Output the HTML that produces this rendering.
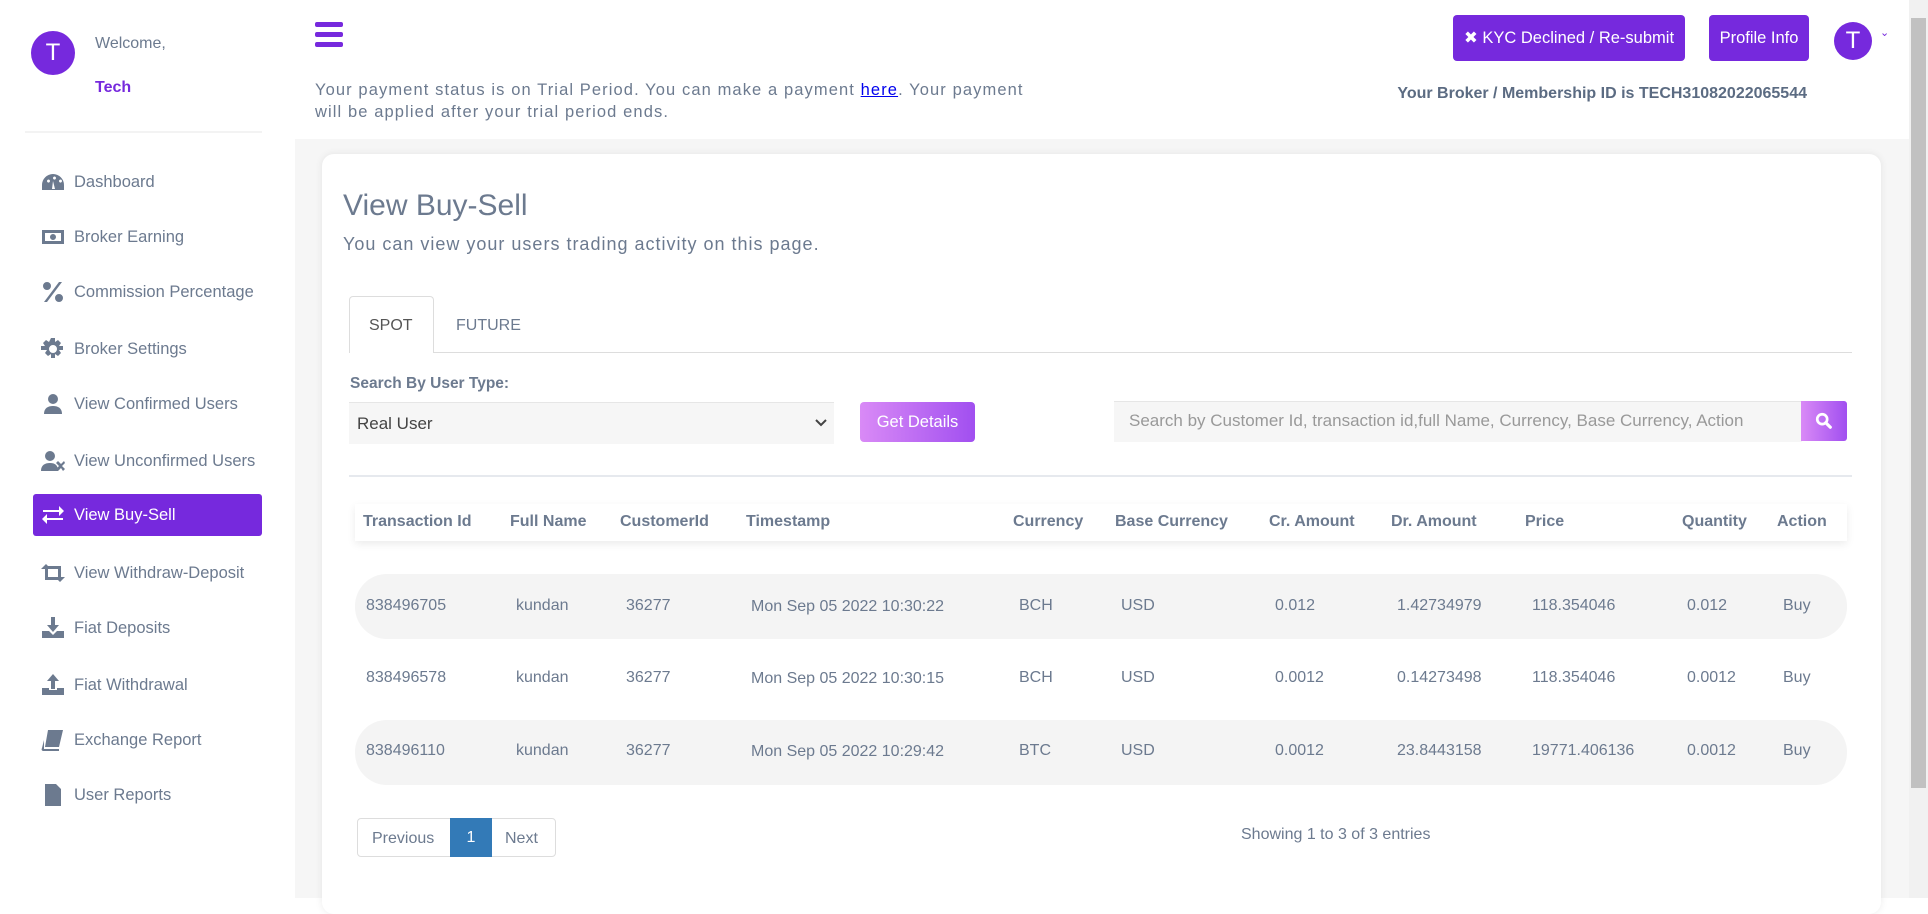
<!DOCTYPE html>
<html><head><meta charset="utf-8"><style>
*{box-sizing:border-box;margin:0;padding:0}
body{width:1928px;height:898px;overflow:hidden;font-family:"Liberation Sans",sans-serif;background:#fff;position:relative;color:#6c7a8f}
.abs{position:absolute}
.side{left:0;top:0;width:295px;height:898px;background:#fff}
.main{left:295px;top:139px;width:1614px;height:759px;background:#f6f6f6}
.av{border-radius:50%;background:#7629dd;color:#fff;display:flex;align-items:center;justify-content:center}
.mi{position:absolute;left:41px;font-size:16.5px;color:#6c7a8f;display:flex;align-items:center;height:40px}
.mi svg{width:24px;height:22px;margin-right:9px;fill:#6c7a8f}
.mi.act{left:33px;width:229px;height:42px;background:#7629dd;color:#fff;border-radius:3px;padding-left:8px}
.mi.act svg{fill:#fff}
.btn{background:#7629dd;color:#fff;border-radius:4px;font-size:16.5px;display:flex;align-items:center;justify-content:center}
.card{left:322px;top:154px;width:1559px;height:760px;background:#fff;border-radius:12px;box-shadow:0 0 8px rgba(0,0,0,.08)}
.th{position:absolute;top:513px;font-size:16px;font-weight:bold;color:#6c7a8f}
.td{position:absolute;font-size:16px;color:#6c7a8f}
.row{position:absolute;left:355px;width:1492px;height:65px;background:#f4f4f4;border-radius:32px}
</style></head><body>
<div class="abs side"></div>
<div class="abs main"></div>
<div class="abs av" style="left:31px;top:31px;width:44px;height:44px;font-size:24px">T</div>
<div class="abs" style="left:95px;top:35px;font-size:16px">Welcome,</div>
<div class="abs" style="left:95px;top:79px;font-size:16px;font-weight:bold;color:#7629dd">Tech</div>
<div class="abs" style="left:25px;top:131px;width:237px;height:2px;background:#f3f3f3"></div>

<div class="mi" style="top:162px"><svg viewBox="0 0 24 22"><path d="M12 3A11 11 0 0 0 1 14v5h22v-5A11 11 0 0 0 12 3zm0 4a1.5 1.5 0 1 1 0 .1zM6 10a1.5 1.5 0 1 1 0 .1zm12 0a1.5 1.5 0 1 1 0 .1zM11 18l1-8 2 8z"/></svg>Dashboard</div>
<div class="mi" style="top:217px"><svg viewBox="0 0 24 22"><path d="M1 4h22v14H1zm3 3v8h16V7zm8 1a3 3 0 1 1 0 6 3 3 0 0 1 0-6z"/></svg>Broker Earning</div>
<div class="mi" style="top:272px"><svg viewBox="0 0 24 22"><path d="M6 1a4 4 0 1 1 0 8 4 4 0 0 1 0-8zm12 12a4 4 0 1 1 0 8 4 4 0 0 1 0-8zM18 1h3L6 21H3z"/></svg>Commission Percentage</div>
<div class="mi" style="top:329px"><svg viewBox="0 0 24 22"><path d="M10 0h4v4l3-2 3 3-2 3h4v4h-4l2 3-3 3-3-2v4h-4v-4l-3 2-3-3 2-3H0V8h4L2 5l3-3 3 2zM12 7a4 4 0 1 0 0 8 4 4 0 0 0 0-8z"/></svg>Broker Settings</div>
<div class="mi" style="top:384px"><svg viewBox="0 0 24 22"><circle cx="12" cy="6" r="5"/><path d="M3 21c0-6 4-8 9-8s9 2 9 8z"/></svg>View Confirmed Users</div>
<div class="mi" style="top:441px"><svg viewBox="0 0 24 22"><circle cx="9" cy="6" r="5"/><path d="M0 21c0-6 4-8 9-8s8 2 8 8zM15 13l2-2 3 3 3-3 1 2-3 3 3 3-2 2-2-3-3 3-2-2 3-3z"/></svg>View Unconfirmed Users</div>
<div class="mi act" style="top:494px"><svg viewBox="0 0 24 22"><path d="M2 6h16V2l5 5-5 5V8H2zM22 14H6v-4l-5 5 5 5v-4h16z"/></svg>View Buy-Sell</div>
<div class="mi" style="top:553px"><svg viewBox="0 0 24 22"><path d="M5 2l5 5H7v8h9l3 3H4V7H0zM19 20l-5-5h3V7H8L5 4h15v11h4z"/></svg>View Withdraw-Deposit</div>
<div class="mi" style="top:608px"><svg viewBox="0 0 24 22"><path d="M10 0h4v8h4l-6 7-6-7h4zM1 14h7l4 4 4-4h7v7H1z"/></svg>Fiat Deposits</div>
<div class="mi" style="top:665px"><svg viewBox="0 0 24 22"><path d="M12 0l6 7h-4v8h-4V7H6zM1 14h7v2h8v-2h7v7H1z"/></svg>Fiat Withdrawal</div>
<div class="mi" style="top:720px"><svg viewBox="0 0 24 22"><path d="M7 1h15l-4 17H4zM3 20h15v2H3c-2 0-3-1-2-3l2-8z"/></svg>Exchange Report</div>
<div class="mi" style="top:775px"><svg viewBox="0 0 24 22"><path d="M4 0h11l5 5v17H4zM7 10h10v2H7zm0 4h10v2H7zm0 4h10v2H7z"/></svg>User Reports</div>

<div class="abs" style="left:315px;top:22px;width:28px;height:5px;background:#7629dd;border-radius:2px"></div>
<div class="abs" style="left:315px;top:32px;width:28px;height:5px;background:#7629dd;border-radius:2px"></div>
<div class="abs" style="left:315px;top:42px;width:28px;height:5px;background:#7629dd;border-radius:2px"></div>
<div class="abs" style="left:315px;top:79px;width:760px;font-size:16.5px;line-height:22px;letter-spacing:1.1px;color:#6c7a8f">Your payment status is on Trial Period. You can make a payment <span style="color:#0000ee;text-decoration:underline">here</span>. Your payment<br>will be applied after your trial period ends.</div>

<div class="abs btn" style="left:1453px;top:15px;width:232px;height:46px">✖ KYC Declined / Re-submit</div>
<div class="abs btn" style="left:1709px;top:15px;width:100px;height:46px">Profile Info</div>
<div class="abs av" style="left:1834px;top:22px;width:38px;height:38px;font-size:24px">T</div>
<div class="abs" style="left:1880px;top:26px;font-size:11px;color:#7629dd">&#8964;</div>
<div class="abs" style="right:121px;top:85px;font-size:16px;font-weight:bold;color:#5b6b82">Your Broker / Membership ID is TECH31082022065544</div>

<div class="abs" style="left:1909px;top:0;width:19px;height:898px;background:#f1f1f1"></div>
<div class="abs" style="left:1911px;top:18px;width:15px;height:770px;background:#c1c1c1"></div>

<div class="abs card"></div>
<div class="abs" style="left:343px;top:189px;font-size:30px;color:#6c7a8f">View Buy-Sell</div>
<div class="abs" style="left:343px;top:234px;font-size:18px;letter-spacing:1px">You can view your users trading activity on this page.</div>
<div class="abs" style="left:349px;top:352px;width:1503px;height:1px;background:#ddd"></div>
<div class="abs" style="left:349px;top:296px;width:85px;height:57px;border:1px solid #ddd;border-bottom:none;background:#fff;border-radius:4px 4px 0 0"></div>
<div class="abs" style="left:369px;top:317px;font-size:16px;color:#555">SPOT</div>
<div class="abs" style="left:456px;top:317px;font-size:16px;color:#6c7a8f">FUTURE</div>
<div class="abs" style="left:350px;top:375px;font-size:15.5px;font-weight:bold">Search By User Type:</div>
<div class="abs" style="left:349px;top:402px;width:485px;height:42px;background:#f6f6f6;border-top:1px solid #e6e6e6"></div>
<div class="abs" style="left:357px;top:414px;font-size:17px;color:#444">Real User</div>
<svg class="abs" style="left:815px;top:418px;width:12px;height:10px" viewBox="0 0 12 10"><path d="M1 2l5 5 5-5" fill="none" stroke="#444" stroke-width="2"/></svg>
<div class="abs btn" style="left:860px;top:402px;width:115px;height:40px;background:linear-gradient(90deg,#d98af6,#a14ff0)">Get Details</div>
<div class="abs" style="left:1114px;top:401px;width:688px;height:41px;background:#f6f6f6;border-top:1px solid #e6e6e6"></div>
<div class="abs" style="left:1129px;top:411px;font-size:17px;color:#999">Search by Customer Id, transaction id,full Name, Currency, Base Currency, Action</div>
<div class="abs" style="left:1801px;top:401px;width:46px;height:40px;background:linear-gradient(90deg,#d98af6,#a14ff0);border-radius:0 3px 3px 0"><svg viewBox="0 0 20 20" style="position:absolute;left:14px;top:11px;width:18px;height:18px"><circle cx="8" cy="8" r="5.5" fill="none" stroke="#fff" stroke-width="3"/><path d="M12 12l5 5" stroke="#fff" stroke-width="3.5" stroke-linecap="round"/></svg></div>
<div class="abs" style="left:349px;top:475px;width:1503px;height:2px;background:#e6e9ee"></div>

<div class="abs" style="left:355px;top:504px;width:1492px;height:37px;background:#fff;box-shadow:0 3px 8px rgba(0,0,0,.08)"></div>
<div class="th" style="left:363px">Transaction Id</div>
<div class="th" style="left:510px">Full Name</div>
<div class="th" style="left:620px">CustomerId</div>
<div class="th" style="left:746px">Timestamp</div>
<div class="th" style="left:1013px">Currency</div>
<div class="th" style="left:1115px">Base Currency</div>
<div class="th" style="left:1269px">Cr. Amount</div>
<div class="th" style="left:1391px">Dr. Amount</div>
<div class="th" style="left:1525px">Price</div>
<div class="th" style="left:1682px">Quantity</div>
<div class="th" style="left:1777px">Action</div>

<div class="row" style="top:574px"></div>
<div class="row" style="top:720px"></div>

<div class="td" style="top:597px;left:366px">838496705</div><div class="td" style="top:597px;left:516px">kundan</div><div class="td" style="top:597px;left:626px">36277</div><div class="td" style="top:598px;left:751px">Mon Sep 05 2022 10:30:22</div><div class="td" style="top:597px;left:1019px">BCH</div><div class="td" style="top:597px;left:1121px">USD</div><div class="td" style="top:597px;left:1275px">0.012</div><div class="td" style="top:597px;left:1397px">1.42734979</div><div class="td" style="top:597px;left:1532px">118.354046</div><div class="td" style="top:597px;left:1687px">0.012</div><div class="td" style="top:597px;left:1783px">Buy</div>

<div class="td" style="top:669px;left:366px">838496578</div><div class="td" style="top:669px;left:516px">kundan</div><div class="td" style="top:669px;left:626px">36277</div><div class="td" style="top:670px;left:751px">Mon Sep 05 2022 10:30:15</div><div class="td" style="top:669px;left:1019px">BCH</div><div class="td" style="top:669px;left:1121px">USD</div><div class="td" style="top:669px;left:1275px">0.0012</div><div class="td" style="top:669px;left:1397px">0.14273498</div><div class="td" style="top:669px;left:1532px">118.354046</div><div class="td" style="top:669px;left:1687px">0.0012</div><div class="td" style="top:669px;left:1783px">Buy</div>

<div class="td" style="top:742px;left:366px">838496110</div><div class="td" style="top:742px;left:516px">kundan</div><div class="td" style="top:742px;left:626px">36277</div><div class="td" style="top:743px;left:751px">Mon Sep 05 2022 10:29:42</div><div class="td" style="top:742px;left:1019px">BTC</div><div class="td" style="top:742px;left:1121px">USD</div><div class="td" style="top:742px;left:1275px">0.0012</div><div class="td" style="top:742px;left:1397px">23.8443158</div><div class="td" style="top:742px;left:1532px">19771.406136</div><div class="td" style="top:742px;left:1687px">0.0012</div><div class="td" style="top:742px;left:1783px">Buy</div>

<div class="abs" style="left:357px;top:818px;width:199px;height:39px;border:1px solid #ddd;border-radius:4px;background:#fff"></div>
<div class="abs" style="left:450px;top:818px;width:42px;height:39px;background:#337ab7;color:#fff;font-size:16px;display:flex;align-items:center;justify-content:center">1</div>
<div class="abs" style="left:372px;top:830px;font-size:16px;color:#6c7a8f">Previous</div>
<div class="abs" style="left:505px;top:830px;font-size:16px;color:#6c7a8f">Next</div>
<div class="abs" style="left:1241px;top:826px;font-size:16px;color:#6c7a8f">Showing 1 to 3 of 3 entries</div>
</body></html>
